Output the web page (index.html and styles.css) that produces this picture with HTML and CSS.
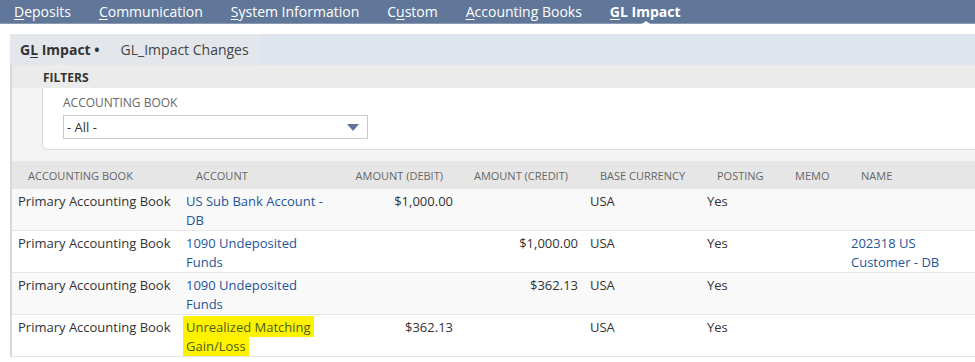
FILE: index.html
```html
<!DOCTYPE html>
<html lang="en">
<head>
    <meta charset="UTF-8">
    <meta name="viewport" content="width=device-width, initial-scale=1.0">
    <title>GL Impact</title>
    <link rel="stylesheet" href="styles.css">
</head>
<body>
    <div class="nav">
        <span class="nav-item"><u>D</u>eposits</span>
        <span class="nav-item"><u>C</u>ommunication</span>
        <span class="nav-item"><u>S</u>ystem Information</span>
        <span class="nav-item">C<u>u</u>stom</span>
        <span class="nav-item"><u>A</u>ccounting Books</span>
        <span class="nav-item active"><u>G</u>L Impact</span>
    </div>

    <div class="page">
        <div class="subtabs">
            <div class="subtab-group">
                <span class="subtab active">G<u>L</u> Impact &bull;</span>
                <span class="subtab">GL_Impact Changes</span>
            </div>
        </div>

        <div class="panel">
            <div class="filters-title">FILTERS</div>
            <div class="filters-area">
                <div class="filters-box">
                    <div class="field-label">ACCOUNTING BOOK</div>
                    <div class="select">
                        <span>- All -</span>
                        <span class="arrow"></span>
                    </div>
                </div>
            </div>

            <table>
                <colgroup>
                    <col style="width: 168px">
                    <col style="width: 160px">
                    <col style="width: 119px">
                    <col style="width: 125px">
                    <col style="width: 117px">
                    <col style="width: 78px">
                    <col style="width: 66px">
                    <col style="width: 122px">
                    <col style="width: 120px">
                </colgroup>
                <thead>
                    <tr>
                        <th>Accounting Book</th>
                        <th>Account</th>
                        <th class="num">Amount (Debit)</th>
                        <th class="num">Amount (Credit)</th>
                        <th>Base Currency</th>
                        <th>Posting</th>
                        <th>Memo</th>
                        <th>Name</th>
                        <th></th>
                    </tr>
                </thead>
                <tbody>
                    <tr>
                        <td class="book">Primary Accounting Book</td>
                        <td><a href="#">US Sub Bank Account - DB</a></td>
                        <td class="num">$1,000.00</td>
                        <td class="num"></td>
                        <td>USA</td>
                        <td>Yes</td>
                        <td></td>
                        <td></td>
                        <td></td>
                    </tr>
                    <tr>
                        <td class="book">Primary Accounting Book</td>
                        <td><a href="#">1090 Undeposited Funds</a></td>
                        <td class="num"></td>
                        <td class="num">$1,000.00</td>
                        <td>USA</td>
                        <td>Yes</td>
                        <td></td>
                        <td><a href="#">202318 US Customer - DB</a></td>
                        <td></td>
                    </tr>
                    <tr>
                        <td class="book">Primary Accounting Book</td>
                        <td><a href="#">1090 Undeposited Funds</a></td>
                        <td class="num"></td>
                        <td class="num">$362.13</td>
                        <td>USA</td>
                        <td>Yes</td>
                        <td></td>
                        <td></td>
                        <td></td>
                    </tr>
                    <tr>
                        <td class="book">Primary Accounting Book</td>
                        <td><a href="#" class="marked">Unrealized Matching Gain/Loss</a></td>
                        <td class="num">$362.13</td>
                        <td class="num"></td>
                        <td>USA</td>
                        <td>Yes</td>
                        <td></td>
                        <td></td>
                        <td></td>
                    </tr>
                </tbody>
            </table>
        </div>
    </div>
</body>
</html>
```

FILE: styles.css
```css
body {
    margin: 0;
    font-family: "Open Sans", Arial, sans-serif;
    background-color: white;
    color: #333;
    overflow: hidden;
}

u {
    text-decoration-thickness: 1px;
    text-underline-offset: 2px;
}

/* barra de pestañas principal */
.nav {
    display: flex;
    align-items: center;
    gap: 28px;
    height: 23px;
    padding-left: 14px;
    background-color: #607799;
    border-bottom: 1px solid #8a9ab3;
}

.nav-item {
    position: relative;
    font-size: 14px;
    color: white;
    white-space: nowrap;
}

.nav-item.active {
    font-weight: bold;
}

.nav-item.active::after {
    content: "";
    position: absolute;
    left: 29px;
    bottom: -5px;
    border-left: 7px solid transparent;
    border-right: 7px solid transparent;
    border-bottom: 5px solid white;
}

.page {
    padding: 10px 0 0 10px;
    overflow: hidden;
}

/* sub pestañas */
.subtabs {
    height: 31px;
    background-color: #dfe5ee;
}

.subtab-group {
    display: flex;
    align-items: center;
    gap: 21px;
    width: 240px;
    height: 100%;
    padding-left: 10px;
    background-color: #e3e6eb;
}

.subtab {
    position: relative;
    font-size: 14px;
    color: #444;
    white-space: nowrap;
}

.subtab.active {
    font-weight: bold;
    color: #333;
}

.subtab.active::after {
    content: "";
    position: absolute;
    left: 33px;
    bottom: -9px;
    border-left: 7px solid transparent;
    border-right: 7px solid transparent;
    border-bottom: 5px solid #ededed;
}

/* panel de filtros */
.panel {
    width: 1077px;
    border-left: 2px solid #d8d8d8;
    background-color: #f3f3f3;
}

.filters-title {
    height: 23px;
    line-height: 25px;
    padding-left: 31px;
    font-size: 12px;
    font-weight: bold;
    color: #333;
    background-color: #ebebeb;
}

.filters-area {
    padding: 0 0 11px 30px;
}

.filters-box {
    height: 54px;
    padding: 7px 0 0 20px;
    background-color: white;
    border: 1px solid #dedede;
    border-right: none;
    border-top: none;
    border-radius: 0 0 0 6px;
}

.field-label {
    font-size: 12px;
    color: #666;
    line-height: 16px;
}

.select {
    display: flex;
    align-items: center;
    justify-content: space-between;
    box-sizing: border-box;
    width: 305px;
    height: 24px;
    margin-top: 4px;
    padding: 0 8px 0 3px;
    border: 1px solid #c9c9c9;
    font-size: 13px;
    color: #333;
}

.arrow {
    border-left: 6px solid transparent;
    border-right: 6px solid transparent;
    border-top: 7px solid #5f7597;
}

/* tabla de impacto */
table {
    border-collapse: collapse;
    table-layout: fixed;
    width: 1075px;
    background-color: white;
}

th {
    height: 28px;
    padding: 0 6px 0 16px;
    font-size: 11px;
    font-weight: normal;
    text-align: left;
    text-transform: uppercase;
    color: #666;
    background-color: #e6e6e6;
    white-space: nowrap;
}

th.num {
    text-align: right;
    padding: 0 16px 0 6px;
}

td {
    padding: 3px 6px 0 6px;
    font-size: 13px;
    line-height: 19px;
    vertical-align: top;
    color: #333;
    border-bottom: 1px solid #e6e6e6;
}

td.book {
    white-space: nowrap;
}

td.num {
    text-align: right;
}

tbody tr:nth-child(odd) td {
    background-color: #f9f9f9;
}

a {
    color: #255599;
    text-decoration: none;
}

a.marked {
    color: #4d5f1c;
    background-color: #fff200;
    padding: 2px 3px 1px 3px;
    margin-left: -3px;
    -webkit-box-decoration-break: clone;
    box-decoration-break: clone;
}
```
